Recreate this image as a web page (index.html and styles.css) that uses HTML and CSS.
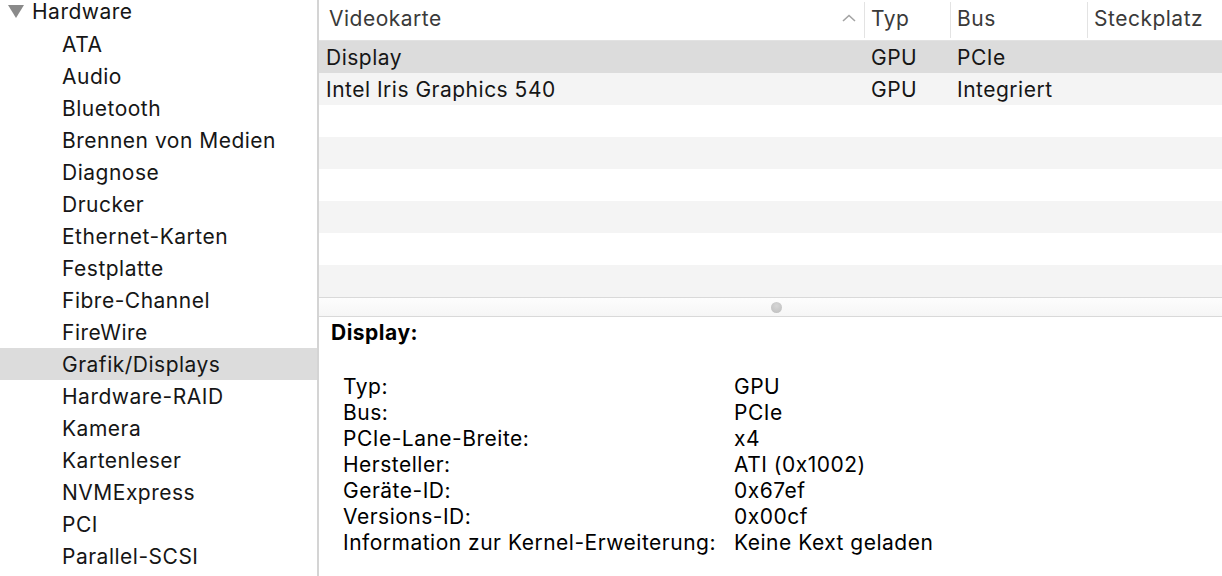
FILE: index.html
```html
<!DOCTYPE html>
<html lang="de">
<head>
	<meta charset="UTF-8">
	<title>Systeminformationen</title>
	<link rel="stylesheet" href="styles.css">
</head>
<body>
	<div id="window">
		<div id="sidebar">
			<ul class="tree">
				<li class="group">
					<svg class="disclosure" width="16" height="13" viewBox="0 0 16 13"><polygon points="0,0 16,0 8,13" fill="#8a8a8a"/></svg>
					Hardware
				</li>
				<li>ATA</li>
				<li>Audio</li>
				<li>Bluetooth</li>
				<li>Brennen von Medien</li>
				<li>Diagnose</li>
				<li>Drucker</li>
				<li>Ethernet-Karten</li>
				<li>Festplatte</li>
				<li>Fibre-Channel</li>
				<li>FireWire</li>
				<li class="selected">Grafik/Displays</li>
				<li>Hardware-RAID</li>
				<li>Kamera</li>
				<li>Kartenleser</li>
				<li>NVMExpress</li>
				<li>PCI</li>
				<li>Parallel-SCSI</li>
			</ul>
		</div>
		<div id="main">
			<div class="table">
				<div class="head">
					<div class="col c-name">
						<span>Videokarte</span>
						<svg class="sort" width="14" height="8" viewBox="0 0 14 8"><polyline points="1,7 7,1.5 13,7" fill="none" stroke="#a3a3a3" stroke-width="1.6"/></svg>
					</div>
					<div class="col c-typ">Typ</div>
					<div class="col c-bus">Bus</div>
					<div class="col c-slot">Steckplatz</div>
				</div>
				<div class="row selected">
					<div class="col c-name">Display</div>
					<div class="col c-typ">GPU</div>
					<div class="col c-bus">PCIe</div>
					<div class="col c-slot"></div>
				</div>
				<div class="row">
					<div class="col c-name">Intel Iris Graphics 540</div>
					<div class="col c-typ">GPU</div>
					<div class="col c-bus">Integriert</div>
					<div class="col c-slot"></div>
				</div>
				<div class="row"></div>
				<div class="row"></div>
				<div class="row"></div>
				<div class="row"></div>
				<div class="row"></div>
				<div class="row"></div>
			</div>
			<div class="splitter"><span class="grip"></span></div>
			<div class="detail">
				<h2>Display:</h2>
				<dl>
					<dt>Typ:</dt><dd>GPU</dd>
					<dt>Bus:</dt><dd>PCIe</dd>
					<dt>PCIe-Lane-Breite:</dt><dd>x4</dd>
					<dt>Hersteller:</dt><dd>ATI (0x1002)</dd>
					<dt>Geräte-ID:</dt><dd>0x67ef</dd>
					<dt>Versions-ID:</dt><dd>0x00cf</dd>
					<dt>Information zur Kernel-Erweiterung:</dt><dd>Keine Kext geladen</dd>
				</dl>
			</div>
		</div>
	</div>
</body>
</html>
```

FILE: styles.css
```css
*{
	margin: 0;
	padding: 0;
	box-sizing: border-box;
}
ul{
	list-style: none;
}
html, body{
	height: 100%;
	overflow: hidden;
	background: #fff;
}
body{
	font-family: Inter, "Noto Sans", "Liberation Sans", sans-serif;
	font-size: 21px;
	letter-spacing: 0.5px;
	color: #161616;
}
#window{
	display: flex;
	height: 576px;
}

/* sidebar */
#sidebar{
	width: 319px;
	flex: none;
	border-right: 2px solid #d4d4d4;
	overflow: hidden;
}
.tree{
	margin-top: -4px;
}
.tree li{
	height: 32px;
	line-height: 34px;
	padding-left: 62px;
	white-space: nowrap;
}
.tree .group{
	display: flex;
	align-items: center;
	padding-left: 8px;
}
.tree .disclosure{
	margin-right: 8px;
	margin-top: -1px;
}
.tree .selected{
	background: #dcdcdc;
}

/* table */
#main{
	flex: 1;
	display: flex;
	flex-direction: column;
	min-width: 0;
}
.head, .row{
	display: flex;
	height: 32px;
	line-height: 33px;
	white-space: nowrap;
}
.head{
	height: 41px;
	border-bottom: 1px solid #e2e2e2;
	color: #3a3a3a;
}
.row:nth-child(odd){
	background: #f4f4f4;
}
.row.selected{
	background: #dcdcdc;
}
.col{
	flex: none;
	padding-left: 7px;
}
.c-name{
	width: 545px;
}
.c-typ{
	width: 86px;
}
.c-bus{
	width: 137px;
}
.c-slot{
	flex: 1;
}
.head .col{
	padding-left: 6px;
}
.head .c-name{
	height: 37px;
	padding-left: 10px;
	display: flex;
	align-items: center;
	justify-content: space-between;
	padding-right: 8px;
}
.head .c-typ, .head .c-bus, .head .c-slot{
	border-left: 1px solid #e3e3e3;
	height: 36px;
	margin-top: 2px;
	line-height: 33px;
}
.head .sort{
	margin-top: -2px;
}

/* split */
.splitter{
	height: 20px;
	border-top: 1px solid #d9d9d9;
	border-bottom: 1px solid #d9d9d9;
	background: linear-gradient(#fdfdfd, #f6f6f6);
	display: flex;
	justify-content: center;
	align-items: center;
}
.grip{
	width: 11px;
	height: 11px;
	border-radius: 50%;
	background: radial-gradient(circle at 50% 35%, #d6d6d6, #bdbdbd);
	margin-left: 11px;
}

/* detail */
.detail{
	padding: 3px 0 0 12px;
	color: #000;
	line-height: 26px;
}
.detail h2{
	font-size: 21px;
	font-weight: 700;
	margin-bottom: 28px;
}
.detail dl{
	display: grid;
	grid-template-columns: 391px auto;
	padding-left: 12px;
}
```
